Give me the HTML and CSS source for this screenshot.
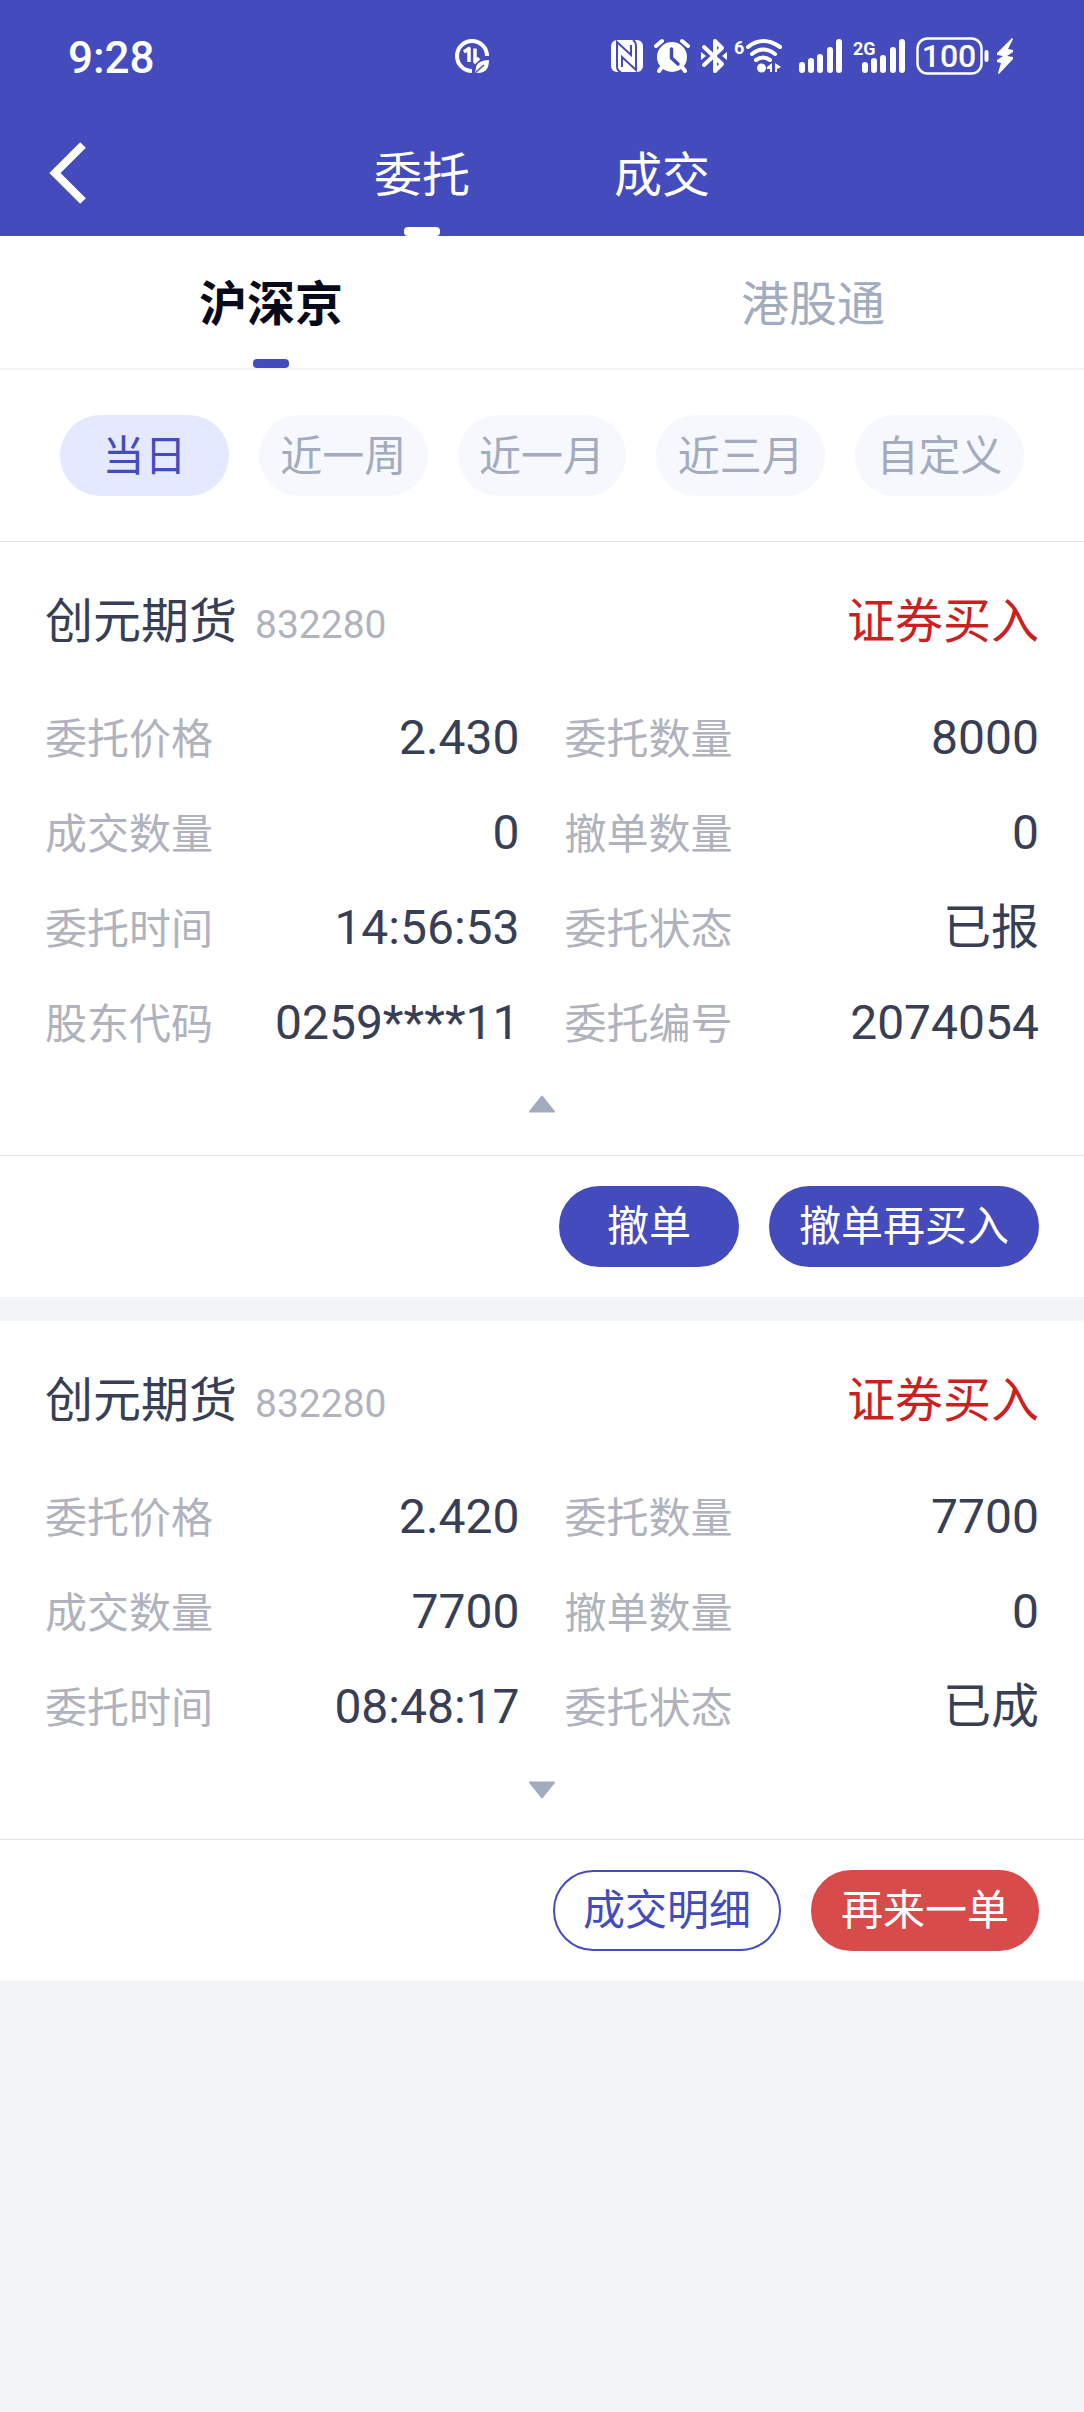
FILE: index.html
```html
<!DOCTYPE html>
<html lang="zh-CN">
<head>
<meta charset="utf-8">
<meta name="viewport" content="width=device-width, initial-scale=1">
<title>委托</title>
<link rel="stylesheet" href="styles.css">
</head>
<body>
<header class="top">
  <div class="status">
    <span class="clock">9:28</span>
    <svg class="saver" width="34" height="34" viewBox="0 0 34 34" aria-hidden="true">
      <path d="M17 32A15 15 0 1 1 32 17" fill="none" stroke="#fff" stroke-width="4"/>
      <path d="M9 13L14 9.500V23M20 9.500V23L24 19" fill="none" stroke="#fff" stroke-width="3.500" stroke-linejoin="round"/>
      <path d="M34 21C27 21 21 24 21 29L20 33L23 34C31 34 34 29 34 21Z" fill="#fff"/>
      <path d="M21 33L29 26" stroke="#444cbd" stroke-width="1.500"/>
    </svg>
    <div class="indicators">
      <svg width="32" height="36" viewBox="0 0 32 36" aria-hidden="true">
        <rect x="0" y="2" width="32" height="32" rx="6" fill="#fff"/>
        <path d="M10 34Q6 33 6 28V4L20 17V7M22 2Q25 4 25 8V32L11 19V29" fill="none" stroke="#444cbd" stroke-width="2"/>
      </svg>
      <svg class="alarm" width="36" height="36" viewBox="0 0 36 36" aria-hidden="true">
        <circle cx="18" cy="19" r="15" fill="#fff"/>
        <path d="M2 8L8 3M34 8L28 3M8 29L5 33M28 29L31 33" stroke="#fff" stroke-width="4" stroke-linecap="round"/>
        <path d="M17.500 11V20L24 26" fill="none" stroke="#444cbd" stroke-width="3.500" stroke-linecap="round" stroke-linejoin="round"/>
      </svg>
      <svg class="bluetooth" width="26" height="36" viewBox="0 0 26 36" aria-hidden="true">
        <path d="M3 9L21 26L14 33V3L21 10L3 27" fill="none" stroke="#fff" stroke-width="4" stroke-linejoin="round" stroke-linecap="round"/>
        <path d="M0 14L5 18L0 22ZM26 14L21 18L26 22Z" fill="#fff"/>
      </svg>
      <svg class="wifi" width="50" height="36" viewBox="0 0 50 36" aria-hidden="true">
        <text x="0" y="16" class="tag">6</text>
        <path d="M14 9Q29 -3 46 9M18 16Q29 7 41 16M22 22Q29 17 36 22" fill="none" stroke="#fff" stroke-width="4" stroke-linecap="round"/>
        <circle cx="27.500" cy="30" r="4.500" fill="#fff"/>
        <path d="M38 25V34H36V31H33V29ZM41 25L47 29L43 31V34H41Z" fill="#fff"/>
      </svg>
      <svg class="signal" width="44" height="36" viewBox="0 0 44 36" aria-hidden="true">
        <path d="M3 27V32M12 23V32M21 19V32M31 12V32M40 4V32" stroke="#fff" stroke-width="6" stroke-linecap="round"/>
      </svg>
      <svg class="signal" width="52" height="36" viewBox="0 0 52 36" aria-hidden="true">
        <text x="0" y="17" class="tag">2G</text>
        <path d="M12 27V32M21 23V32M30 20V32M40 12V32M49 4V32" stroke="#fff" stroke-width="6" stroke-linecap="round"/>
      </svg>
      <svg class="battery" width="73" height="38" viewBox="0 0 73 38" aria-hidden="true">
        <rect x="1.500" y="1.500" width="64" height="35" rx="10" fill="none" stroke="#fff" stroke-width="2.500"/>
        <path d="M70.500 15V23" stroke="#fff" stroke-width="4" stroke-linecap="round"/>
        <text x="33" y="30" text-anchor="middle" class="level">100</text>
      </svg>
      <svg class="bolt" width="18" height="38" viewBox="0 0 18 38" aria-hidden="true">
        <path d="M16 1L1 16V18L7 19L1 23V25L5 26L2 36L3 37L17 22V20L11 19L17 15V13L12 12L17 2Z" fill="#fff"/>
      </svg>
    </div>
  </div>
  <nav class="nav">
    <button class="back" type="button" aria-label="返回">
      <svg width="38" height="64" viewBox="0 0 38 64" aria-hidden="true"><path d="M35 3L7 31L35 59" fill="none" stroke="#fff" stroke-width="8"/></svg>
    </button>
    <a class="nav-tab active" href="#orders">委托</a>
    <a class="nav-tab" href="#deals">成交</a>
  </nav>
</header>

<nav class="markets">
  <a class="market active" href="#a-share">沪深京</a>
  <a class="market" href="#hk">港股通</a>
</nav>

<div class="ranges">
  <button class="range active" type="button">当日</button>
  <button class="range" type="button">近一周</button>
  <button class="range" type="button">近一月</button>
  <button class="range" type="button">近三月</button>
  <button class="range" type="button">自定义</button>
</div>

<main class="orders" id="orders">
  <article class="order">
    <header class="order-head">
      <h2 class="name">创元期货</h2><span class="code">832280</span><span class="side">证券买入</span>
    </header>
    <dl class="fields">
      <div class="field"><dt>委托价格</dt><dd>2.430</dd></div>
      <div class="field"><dt>委托数量</dt><dd>8000</dd></div>
      <div class="field"><dt>成交数量</dt><dd>0</dd></div>
      <div class="field"><dt>撤单数量</dt><dd>0</dd></div>
      <div class="field"><dt>委托时间</dt><dd>14:56:53</dd></div>
      <div class="field"><dt>委托状态</dt><dd>已报</dd></div>
      <div class="field"><dt>股东代码</dt><dd>0259****11</dd></div>
      <div class="field"><dt>委托编号</dt><dd>2074054</dd></div>
    </dl>
    <button class="toggle" type="button" aria-label="收起">
      <svg width="28" height="20" viewBox="0 0 28 20" aria-hidden="true"><path d="M14 1.500L26 16.500H2Z" fill="#a3acbf" stroke="#a3acbf" stroke-width="2" stroke-linejoin="round"/></svg>
    </button>
    <footer class="actions">
      <button class="action" type="button">撤单</button>
      <button class="action" type="button">撤单再买入</button>
    </footer>
  </article>

  <article class="order">
    <header class="order-head">
      <h2 class="name">创元期货</h2><span class="code">832280</span><span class="side">证券买入</span>
    </header>
    <dl class="fields">
      <div class="field"><dt>委托价格</dt><dd>2.420</dd></div>
      <div class="field"><dt>委托数量</dt><dd>7700</dd></div>
      <div class="field"><dt>成交数量</dt><dd>7700</dd></div>
      <div class="field"><dt>撤单数量</dt><dd>0</dd></div>
      <div class="field"><dt>委托时间</dt><dd>08:48:17</dd></div>
      <div class="field"><dt>委托状态</dt><dd>已成</dd></div>
    </dl>
    <button class="toggle" type="button" aria-label="展开">
      <svg width="28" height="20" viewBox="0 0 28 20" aria-hidden="true"><path d="M14 18.500L26 3.500H2Z" fill="#a3acbf" stroke="#a3acbf" stroke-width="2" stroke-linejoin="round"/></svg>
    </button>
    <footer class="actions">
      <button class="action outline" type="button">成交明细</button>
      <button class="action danger" type="button">再来一单</button>
    </footer>
  </article>
</main>
</body>
</html>
```
FILE: styles.css
```css
* { box-sizing: border-box; }

body {
  margin: 0;
  background: #f3f4f6;
  color: #383e54;
  font-family: Roboto, "Noto Sans CJK SC", sans-serif;
  font-size: 48px;
  line-height: 60px;
}

button {
  margin: 0;
  padding: 0;
  border: 0;
  background: none;
  font: inherit;
  color: inherit;
}

a { color: inherit; text-decoration: none; }
svg { display: block; flex: none; }

/* status bar and title tabs */
.top { background: #444cbd; color: #fff; }

.status {
  display: flex;
  align-items: center;
  height: 112px;
  padding: 0 70px 0 68px;
}
.clock { padding-top: 4px; font-size: 44px; font-weight: 500; width: 86px; }
.saver { margin-left: 301px; }
.indicators { display: flex; align-items: center; margin-left: auto; }
.alarm { margin-left: 11px; }
.bluetooth { margin-left: 11px; }
.wifi { margin-left: 7px; }
.wifi + .signal { margin-left: 15px; }
.signal + .signal { margin-left: 10px; }
.battery { margin-left: 11px; }
.bolt { margin-left: 7px; }
.tag { fill: #fff; font-size: 18px; font-weight: 700; }
.level { fill: #fff; font-size: 32px; font-weight: 500; }

.nav {
  position: relative;
  display: flex;
  justify-content: center;
  height: 124px;
}
.back {
  position: absolute;
  left: 48px;
  top: 0;
  height: 100%;
  display: flex;
  align-items: center;
}
.nav-tab {
  position: relative;
  width: 240px;
  padding-top: 4px;
  line-height: 120px;
  text-align: center;
}
.nav-tab.active::after,
.market.active::after {
  content: "";
  position: absolute;
  left: 50%;
  bottom: 0;
  width: 36px;
  height: 9px;
  margin-left: -18px;
  border-radius: 4px;
  background: #fff;
}

/* market tabs */
.markets {
  display: grid;
  grid-template-columns: 1fr 1fr;
  background: #fff;
  border-bottom: 2px solid #f3f4f6;
}
.market {
  position: relative;
  padding-top: 6px;
  line-height: 126px;
  text-align: center;
  color: #a3acbf;
}
.market.active { color: #080a1a; font-weight: 700; }
.market.active::after { background: #444cbd; }

/* date range filter */
.ranges {
  display: grid;
  grid-template-columns: repeat(5, 1fr);
  gap: 30px;
  padding: 45px 60px;
  background: #fff;
  border-bottom: 1px solid #e3e4e6;
}
.range {
  height: 81px;
  padding-top: 2px;
  border-radius: 41px;
  background: #f6f8fd;
  color: #a3acbf;
  font-size: 42px;
}
.range.active { background: #e4e9ff; color: #444cbd; }

/* order cards */
.orders { display: grid; gap: 24px; }
.order { background: #fff; }
.order-head {
  display: flex;
  align-items: baseline;
  padding: 50px 45px 0;
}
.name { margin: 0; font-size: 48px; font-weight: 400; }
.code { margin-left: 18px; font-size: 39px; color: #b0b3bd; }
.side { margin-left: auto; color: #cc1f1f; }

.fields {
  display: grid;
  grid-template-columns: 1fr 1fr;
  gap: 35px 45px;
  margin: 0;
  padding: 53px 45px 42px;
}
.field {
  display: flex;
  align-items: baseline;
  justify-content: space-between;
  height: 60px;
}
dt { font-size: 42px; color: #b0b3bd; }
dd { margin: 0; }

.toggle { display: block; margin: 0 auto; padding-bottom: 40px; }

.actions {
  display: flex;
  justify-content: flex-end;
  gap: 30px;
  padding: 30px 45px;
  border-top: 1px solid #e3e4e6;
}
.action {
  min-width: 180px;
  height: 81px;
  padding: 0 28px;
  border: 2px solid #444cbd;
  border-radius: 41px;
  background: #444cbd;
  color: #fff;
  font-size: 42px;
}
.outline { background: #fff; color: #444cbd; }
.danger { background: #d84b4b; border-color: #d84b4b; }
```
